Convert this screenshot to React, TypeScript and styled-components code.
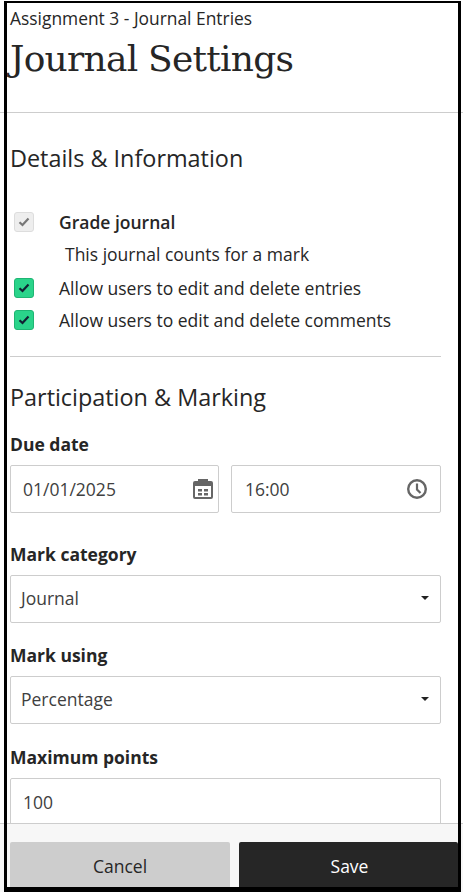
import React from "react";
import styled, { createGlobalStyle } from "styled-components";

const GlobalStyle = createGlobalStyle`
  html, body {
    margin: 0;
    padding: 0;
    background: #fff;
  }
  * {
    box-sizing: border-box;
  }
`;

function CalendarIcon() {
  return (
    <svg width="22" height="22" viewBox="0 0 22 22">
      <path
        fill="#666"
        fillRule="evenodd"
        d="M6 1h10v2h3a2 2 0 0 1 2 2v14a2 2 0 0 1-2 2H3a2 2 0 0 1-2-2V5a2 2 0 0 1 2-2h3V1zM3 8v11h16V8H3zm3 3h4v2.500H6V11zm6 0h4v2.500h-4V11zm-6 4h4v2.500H6V15zm6 0h4v2.500h-4V15z"
      />
    </svg>
  );
}

function ClockIcon() {
  return (
    <svg width="22" height="22" viewBox="0 0 22 22" fill="none" stroke="#666">
      <circle cx="11" cy="11" r="8.800" strokeWidth="2.400" />
      <path d="M11 5.500V11.500L14.500 15" strokeWidth="2.200" />
    </svg>
  );
}

function CheckMark({ color }: { color: string }) {
  return (
    <svg width="12" height="10" viewBox="0 0 12 10" fill="none">
      <path d="M1.500 5.200L4.500 8L10.500 1.500" stroke={color} strokeWidth="2.200" />
    </svg>
  );
}

function App() {
  return (
    <Page>
      <GlobalStyle />
      <Scroller>
        <PageHeader>
          <Breadcrumb>Assignment 3 - Journal Entries</Breadcrumb>
          <Title>Journal Settings</Title>
        </PageHeader>
        <Content>
          <SectionTitle>Details &amp; Information</SectionTitle>
          <CheckRow>
            <CheckBox $checked={false}>
              <CheckMark color="#777" />
            </CheckBox>
            <CheckLabel $strong>Grade journal</CheckLabel>
          </CheckRow>
          <HintText>This journal counts for a mark</HintText>
          <CheckRow>
            <CheckBox $checked>
              <CheckMark color="#123" />
            </CheckBox>
            <CheckLabel>Allow users to edit and delete entries</CheckLabel>
          </CheckRow>
          <CheckRow>
            <CheckBox $checked>
              <CheckMark color="#123" />
            </CheckBox>
            <CheckLabel>Allow users to edit and delete comments</CheckLabel>
          </CheckRow>
          <Divider />
          <SubTitle>Participation &amp; Marking</SubTitle>
          <FieldLabel>Due date</FieldLabel>
          <DateRow>
            <InputBox $iconInset={4}>
              <InputText>01/01/2025</InputText>
              <CalendarIcon />
            </InputBox>
            <InputBox $textInset={13}>
              <InputText>16:00</InputText>
              <ClockIcon />
            </InputBox>
          </DateRow>
          <FieldLabel>Mark category</FieldLabel>
          <SelectBox>
            Journal
            <Caret />
          </SelectBox>
          <FieldLabel>Mark using</FieldLabel>
          <SelectBox>
            Percentage
            <Caret />
          </SelectBox>
          <FieldLabel>Maximum points</FieldLabel>
          <InputBox>
            <InputText>100</InputText>
          </InputBox>
        </Content>
      </Scroller>
      <Footer>
        <FooterButton>Cancel</FooterButton>
        <FooterButton $primary>Save</FooterButton>
      </Footer>
      <FrameOutline />
    </Page>
  );
}

const Page = styled.div`
  position: relative;
  width: 463px;
  height: 894px;
  padding-bottom: 2px;
  background: #fff;
  display: flex;
  flex-direction: column;
  overflow: hidden;
  font-family: "Open Sans", sans-serif;
  color: #262626;
`;

const FrameOutline = styled.div`
  position: absolute;
  left: 4px;
  top: 1px;
  width: 457px;
  height: 891px;
  border-style: solid;
  border-color: #000;
  border-width: 2px 3px 5px 3px;
  pointer-events: none;
`;

const Scroller = styled.div`
  flex: 1;
  min-height: 0;
  overflow: hidden;
`;

const PageHeader = styled.header`
  height: 113px;
  padding: 7px 10px 0;
  border-bottom: 1px solid #cdcdcd;
`;

const Breadcrumb = styled.div`
  font-size: 17.4px;
  line-height: 22px;
`;

const Title = styled.h1`
  margin: 7px 0 0;
  font-family: "DejaVu Serif", serif;
  font-weight: 400;
  font-size: 36px;
  letter-spacing: -0.75px;
  line-height: 46px;
`;

const Content = styled.main`
  padding: 0 22px 0 10px;
`;

const SectionTitle = styled.h2`
  margin: 29px 0 32px;
  font-size: 23.4px;
  font-weight: 400;
  line-height: 32px;
`;

const CheckRow = styled.div`
  display: flex;
  align-items: center;
  height: 32px;
  padding-left: 4px;
`;

const CheckBox = styled.span<{ $checked: boolean }>`
  width: 20px;
  height: 20px;
  border-radius: 3px;
  display: flex;
  align-items: center;
  justify-content: center;
  background: ${(p) => (p.$checked ? "#2ad48a" : "#eeeeee")};
  border: 1px solid ${(p) => (p.$checked ? "#1fb573" : "#dddddd")};
`;

const CheckLabel = styled.span<{ $strong?: boolean }>`
  margin-left: 25px;
  font-size: 17.5px;
  font-weight: ${(p) => (p.$strong ? 600 : 400)};
`;

const HintText = styled.div`
  height: 34px;
  padding-left: 55px;
  font-size: 17.5px;
  line-height: 32px;
`;

const Divider = styled.hr`
  margin: 20px 0 0;
  border: 0;
  border-top: 1px solid #cdcdcd;
`;

const SubTitle = styled.h2`
  margin: 24px 0 19px;
  font-size: 23.4px;
  font-weight: 400;
  line-height: 32px;
`;

const FieldLabel = styled.div`
  font-size: 17.5px;
  font-weight: 700;
  line-height: 24px;
  margin-bottom: 9px;
`;

const DateRow = styled.div`
  display: grid;
  grid-template-columns: 209px 210px;
  gap: 12px;
  margin-bottom: 29px;
`;

const InputBox = styled.div<{ $iconInset?: number; $textInset?: number }>`
  height: 48px;
  display: flex;
  align-items: center;
  justify-content: space-between;
  padding: 0 ${(p) => p.$iconInset ?? 12}px 0 ${(p) => p.$textInset ?? 12}px;
  border: 1px solid #cdcdcd;
  border-radius: 2px;
  font-size: 17.5px;
  background: #fff;
`;

const InputText = styled.span`
  color: #404040;
`;

const SelectBox = styled.div`
  height: 48px;
  display: flex;
  align-items: center;
  justify-content: space-between;
  padding: 0 11px 2px 10px;
  margin-bottom: 20.4px;
  border: 1px solid #cdcdcd;
  border-radius: 2px;
  font-size: 17.5px;
  color: #404040;
`;

const Caret = styled.span`
  width: 0;
  height: 0;
  border-left: 4px solid transparent;
  border-right: 4px solid transparent;
  border-top: 4px solid #222;
`;

const Footer = styled.footer`
  flex: none;
  height: 69px;
  padding: 18px 5px 0 10px;
  display: grid;
  grid-template-columns: 220px 219px;
  gap: 9px;
  background: #f7f7f7;
  border-top: 1px solid #cdcdcd;
`;

const FooterButton = styled.button<{ $primary?: boolean }>`
  border: 0;
  padding: 0 0 2px ${(p) => (p.$primary ? 2 : 0)}px;
  border-radius: 2px 2px 0 0;
  font-family: inherit;
  font-size: 17.5px;
  background: ${(p) => (p.$primary ? "#262626" : "#cdcdcd")};
  color: ${(p) => (p.$primary ? "#fff" : "#262626")};
`;

export default App;
